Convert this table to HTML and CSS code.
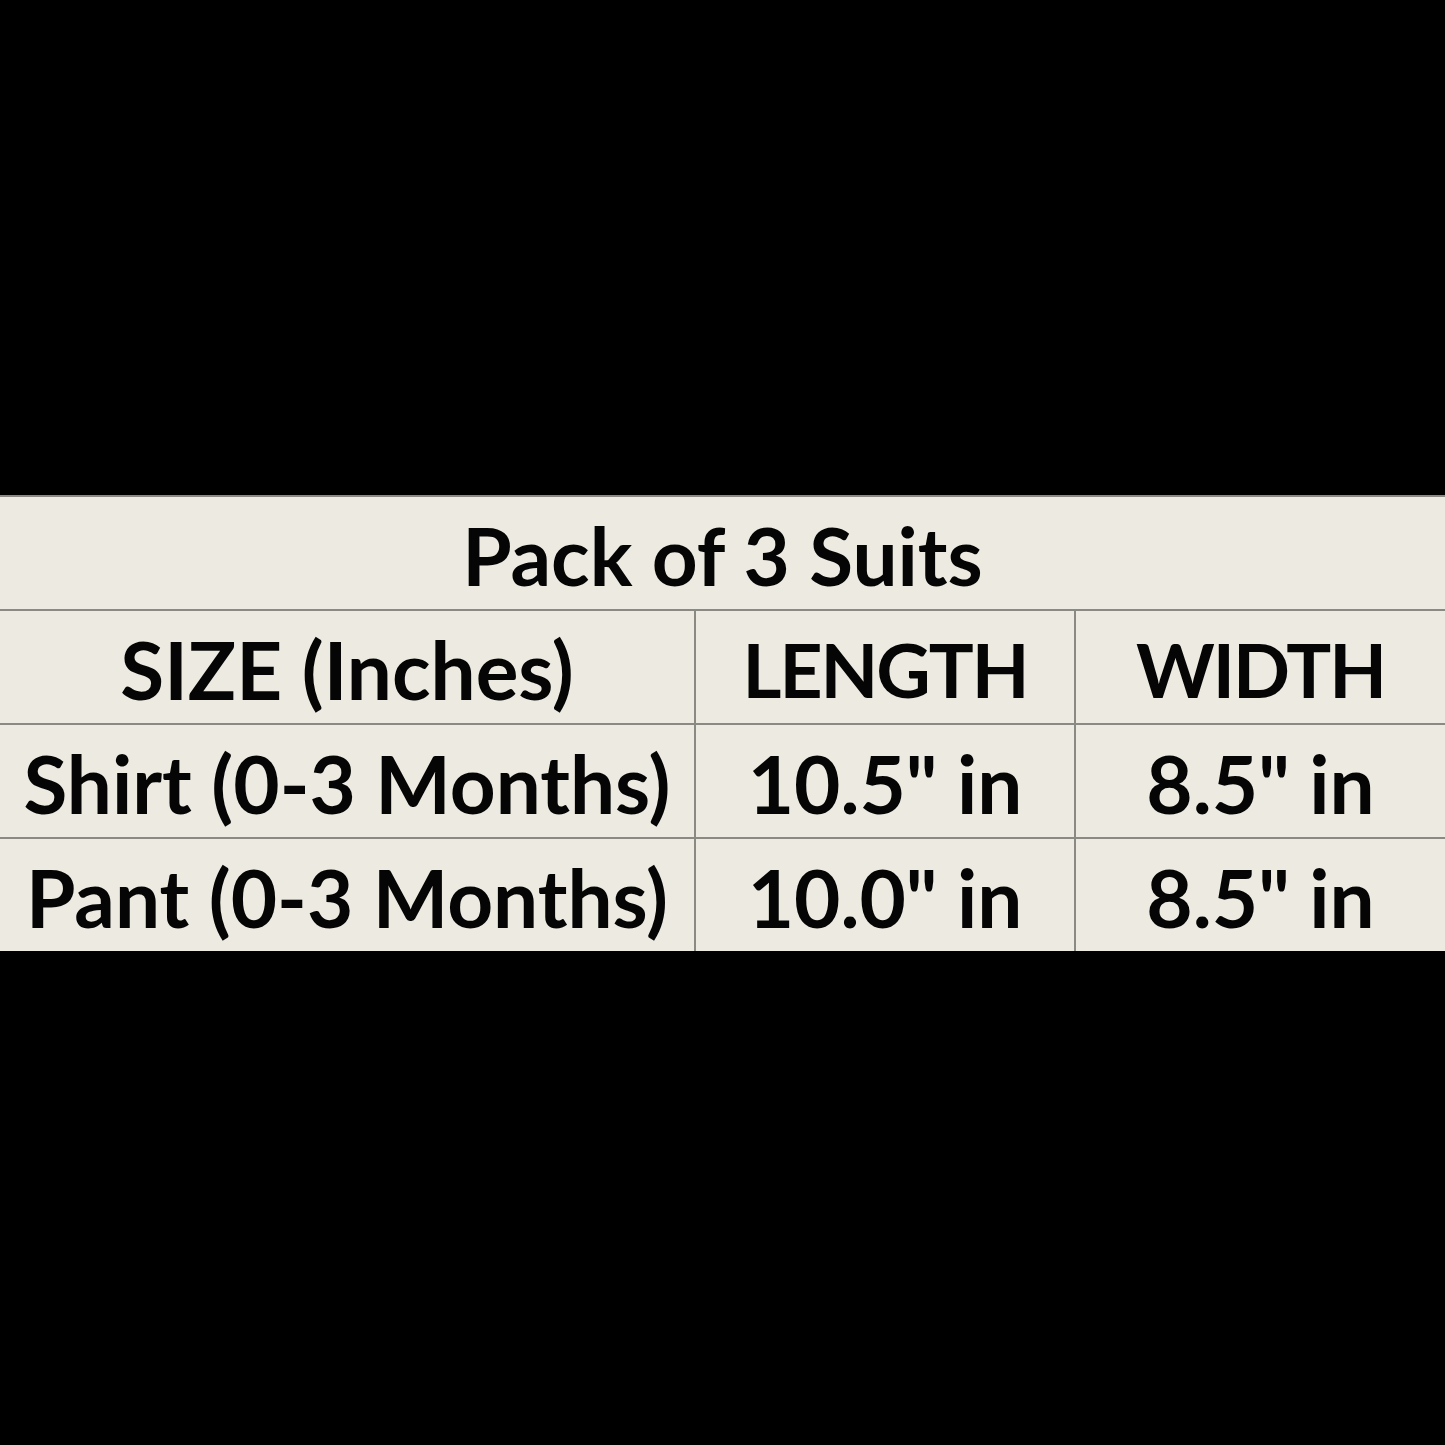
FILE: index.html
```html
<!DOCTYPE html>
<html>
<head>
<meta charset="utf-8">
<link rel="stylesheet" href="styles.css">
</head>
<body>
<div class="page">
  <div class="chart">
    <div class="cell title">Pack of 3 Suits</div>
    <div class="cell">SIZE (Inches)</div>
    <div class="cell caps">LENGTH</div>
    <div class="cell caps">WIDTH</div>
    <div class="cell">Shirt (0-3 Months)</div>
    <div class="cell">10.5" in</div>
    <div class="cell">8.5" in</div>
    <div class="cell">Pant (0-3 Months)</div>
    <div class="cell">10.0" in</div>
    <div class="cell">8.5" in</div>
  </div>
</div>
</body>
</html>
```
FILE: styles.css
```css
html, body {
  margin: 0;
  padding: 0;
  background: #000;
}
.page {
  min-height: 1445px;
  display: flex;
  flex-direction: column;
  justify-content: center;
}
.chart {
  display: grid;
  grid-template-columns: 694px 378px 1fr;
  grid-template-rows: repeat(4, 112px);
  gap: 2px;
  background: #8a8984;
  border-top: 2px solid #8a8984;
}
.cell {
  background: #edebe1;
  color: #050505;
  font-family: Lato, "Open Sans", sans-serif;
  font-weight: 700;
  font-size: 80px;
  display: flex;
  align-items: center;
  justify-content: center;
  white-space: nowrap;
  padding-top: 4px;
  box-sizing: border-box;
}
.caps {
  letter-spacing: -2px;
  font-size: 75px;
}
.title {
  grid-column: 1 / 4;
}
```
